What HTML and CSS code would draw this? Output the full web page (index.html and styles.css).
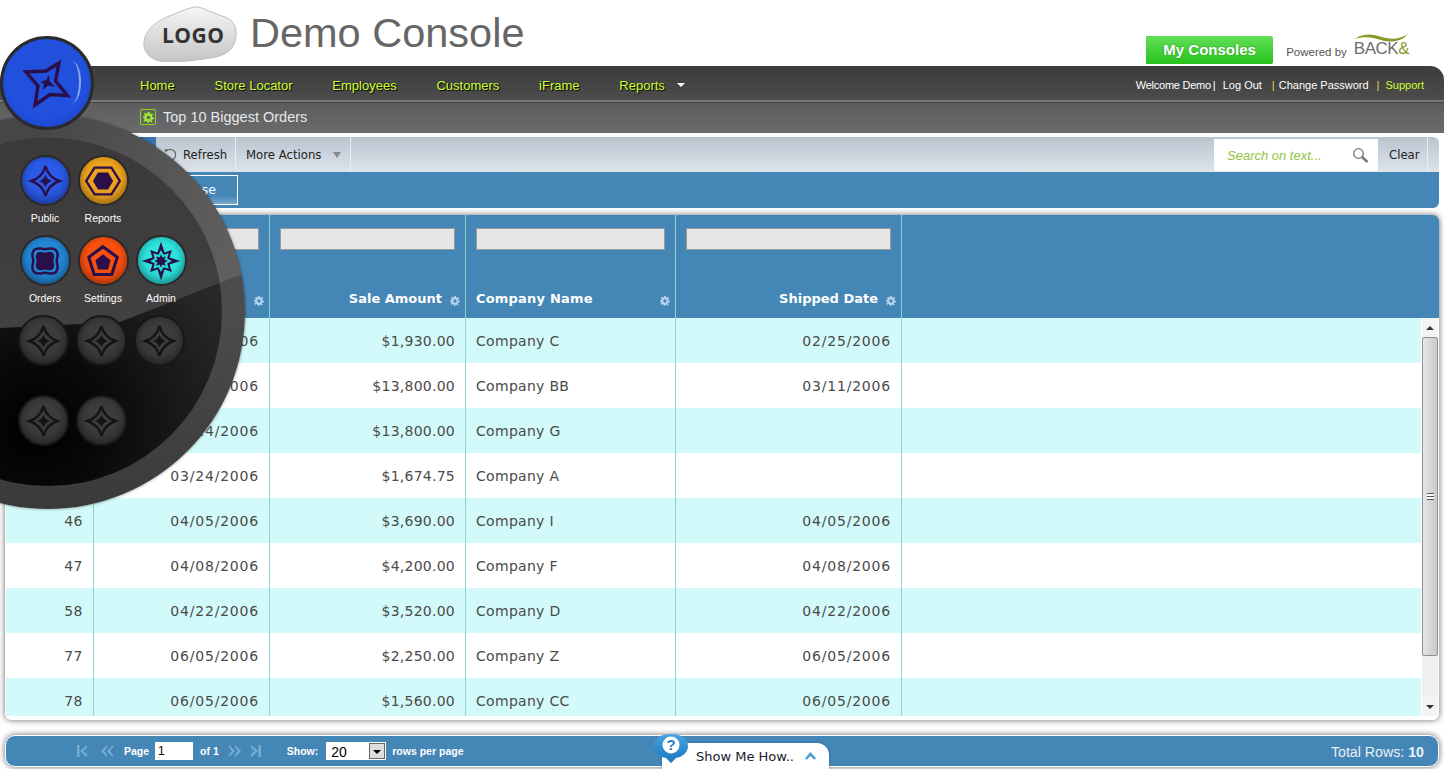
FILE: index.html
```html
<!DOCTYPE html>
<html lang="en">
<head>
<meta charset="utf-8">
<title>Demo Console</title>
<link rel="stylesheet" href="styles.css">
</head>
<body>
<svg class="defs" width="0" height="0" aria-hidden="true">
  <symbol id="star" viewBox="0 0 50 50">
    <path d="M25 9 Q28 21 40 25 Q28 29 25 41 Q22 29 10 25 Q22 21 25 9Z" fill="none" stroke="currentColor" stroke-width="2.6" stroke-linejoin="miter"/>
    <path d="M25 18 Q26.500 23.500 32 25 Q26.500 26.500 25 32 Q23.500 26.500 18 25 Q23.500 23.500 25 18Z" fill="currentColor"/>
  </symbol>
  <symbol id="gear" viewBox="0 0 12 12">
    <path d="M5 0h2l.3 1.700 1.300.5L10 1.300 11 3 9.800 4.200 10.200 5.500 12 6l-.3 1.800-1.700.1-.6 1.300L10.500 10.500 9 11.500 7.800 10.300 6.500 10.700 6 12 4.500 11.700 4.200 10.200 3 9.700 1.500 10.700.500 9.200 1.700 8 1.300 6.800 0 6.500V5l1.500-.3.500-1.200L1 2 2.500.8 3.800 1.800 4.800 1.500Z" fill="currentColor"/>
    <circle class="gear-hole" cx="6" cy="6" r="2"/>
  </symbol>
</svg>

<header class="top">
  <div class="brand">
    <div class="logo">
      <svg class="logo-blob" viewBox="0 0 96 56" width="96" height="56" aria-hidden="true">
        <defs><linearGradient id="lg" x1="0" y1="0" x2="0" y2="1"><stop offset="0" stop-color="#f6f6f6"/><stop offset="1" stop-color="#c4c4c4"/></linearGradient></defs>
        <path d="M2 36C3 24 14 15 30 9 42 4 50 .5 56 1 62 2 70 7 80 10 91 13 95 20 94 30 93 42 86 48 74 51 58 54 40 56 24 56 10 55 1 48 2 36Z" fill="url(#lg)" stroke="#bdbdbd"/>
      </svg>
      <span class="logo-text">LOGO</span>
    </div>
    <h1 class="title">Demo Console</h1>
  </div>
  <div class="top-right">
    <a class="consoles">My Consoles</a>
    <div class="powered">
      <span>Powered by</span>
      <span class="back">
        <svg class="swoosh" viewBox="0 0 56 10" width="56" height="10" aria-hidden="true"><path d="M1 6C10 0 18 1 28 4 38 7 46 6 54 1 47 9 37 10 27 7 18 4 10 3 1 6Z" fill="#8a9a2a"/></svg>
        <span class="back-text">BACK<em>&amp;</em></span>
      </span>
    </div>
  </div>
</header>

<div class="bars">
  <nav class="nav">
    <ul class="menu">
      <li>Home</li><li>Store Locator</li><li>Employees</li><li>Customers</li><li>iFrame</li><li class="has-arrow">Reports</li>
    </ul>
    <div class="user">
      <span class="welcome">Welcome Demo</span><i class="sep">|</i><span class="logout">Log Out</span><i class="sep y">|</i><span>Change Password</span><i class="sep y">|</i><span class="support">Support</span>
    </div>
  </nav>
  <div class="subbar">
    <span class="page-icon"><svg width="11" height="11" aria-hidden="true"><use href="#gear"/></svg></span>
    <span>Top 10 Biggest Orders</span>
  </div>
</div>

<section class="tools">
  <div class="toolbar">
    <span class="tool-blue"></span>
    <span class="tool refresh">
      <svg width="14" height="14" viewBox="0 0 14 14" aria-hidden="true"><path d="M3 3.200A5.500 5.500 0 1 1 1.800 8" fill="none" stroke="#666" stroke-width="1.300"/><path d="M1.500 1l3.500.5-2.500 3Z" fill="#666"/></svg>
      Refresh
    </span>
    <span class="tool more">More Actions <i class="tri"></i></span>
    <span class="tool-space"></span>
    <span class="search"><em>Search on text...</em>
      <svg width="17" height="17" viewBox="0 0 17 17" aria-hidden="true"><circle cx="6.500" cy="6.500" r="4.800" fill="#fff" stroke="#777" stroke-width="1.300"/><path d="M10 10l5.500 5" stroke="#777" stroke-width="2.600"/></svg>
    </span>
    <span class="tool clear">Clear</span>
  </div>
  <div class="actionbar"><a class="close">Close</a></div>
</section>

<main class="grid">
  <div class="grid-scroll">
    <table class="data">
      <colgroup><col class="c1"><col class="c2"><col class="c3"><col class="c4"><col class="c5"><col></colgroup>
      <thead>
        <tr>
          <th class="r"><span class="th-in"><input class="filter" aria-label="Filter id"><span class="th-label"><svg class="gear" aria-hidden="true"><use href="#gear"/></svg></span></span></th>
          <th class="r"><span class="th-in"><input class="filter" aria-label="Filter order date"><span class="th-label"><svg class="gear" aria-hidden="true"><use href="#gear"/></svg></span></span></th>
          <th class="r"><span class="th-in"><input class="filter" aria-label="Filter sale amount"><span class="th-label">Sale Amount<svg class="gear" aria-hidden="true"><use href="#gear"/></svg></span></span></th>
          <th class="l"><span class="th-in"><input class="filter" aria-label="Filter company name"><span class="th-label">Company Name<svg class="gear" aria-hidden="true"><use href="#gear"/></svg></span></span></th>
          <th class="r"><span class="th-in"><input class="filter" aria-label="Filter shipped date"><span class="th-label">Shipped Date<svg class="gear" aria-hidden="true"><use href="#gear"/></svg></span></span></th>
          <th></th>
        </tr>
      </thead>
      <tbody>
        <tr><td class="r">30</td><td class="r">01/20/2006</td><td class="r">$1,930.00</td><td>Company C</td><td class="r">02/25/2006</td><td></td></tr>
        <tr><td class="r">33</td><td class="r">02/10/2006</td><td class="r">$13,800.00</td><td>Company BB</td><td class="r">03/11/2006</td><td></td></tr>
        <tr><td class="r">41</td><td class="r">03/24/2006</td><td class="r">$13,800.00</td><td>Company G</td><td class="r"></td><td></td></tr>
        <tr><td class="r">42</td><td class="r">03/24/2006</td><td class="r">$1,674.75</td><td>Company A</td><td class="r"></td><td></td></tr>
        <tr><td class="r">46</td><td class="r">04/05/2006</td><td class="r">$3,690.00</td><td>Company I</td><td class="r">04/05/2006</td><td></td></tr>
        <tr><td class="r">47</td><td class="r">04/08/2006</td><td class="r">$4,200.00</td><td>Company F</td><td class="r">04/08/2006</td><td></td></tr>
        <tr><td class="r">58</td><td class="r">04/22/2006</td><td class="r">$3,520.00</td><td>Company D</td><td class="r">04/22/2006</td><td></td></tr>
        <tr><td class="r">77</td><td class="r">06/05/2006</td><td class="r">$2,250.00</td><td>Company Z</td><td class="r">06/05/2006</td><td></td></tr>
        <tr><td class="r">78</td><td class="r">06/05/2006</td><td class="r">$1,560.00</td><td>Company CC</td><td class="r">06/05/2006</td><td></td></tr>
      </tbody>
    </table>
  </div>
  <div class="scrollbar" aria-hidden="true">
    <span class="sb-head"></span>
    <span class="sb-up"></span>
    <span class="sb-thumb"><i class="grip"></i></span>
    <span class="sb-rest"></span>
    <span class="sb-down"></span>
  </div>
</main>

<footer class="pager">
  <svg class="pg-icon first" width="11" height="12" viewBox="0 0 11 12" aria-hidden="true"><path d="M0 0h2.500v12H0zM10 0v3L6 6l4 3v3L3 6Z"/></svg>
  <svg class="pg-icon prev" width="12" height="12" viewBox="0 0 12 12" aria-hidden="true"><path d="M6 0v2.500L3 6l3 3.500V12L0 6ZM12 0v2.500L9 6l3 3.500V12L6 6Z"/></svg>
  <span class="pg-text page">Page</span>
  <input class="pg-input" value="1" aria-label="Page">
  <span class="pg-text of">of 1</span>
  <svg class="pg-icon next" width="12" height="12" viewBox="0 0 12 12" aria-hidden="true"><path d="M6 0v2.500L9 6 6 9.500V12l6-6ZM0 0v2.500L3 6 0 9.500V12l6-6Z"/></svg>
  <svg class="pg-icon last" width="11" height="12" viewBox="0 0 11 12" aria-hidden="true"><path d="M11 0H8.500v12H11zM1 0v3l4 3-4 3v3l7-6Z"/></svg>
  <span class="pg-text show">Show:</span>
  <span class="pg-select">20<i class="pg-drop"></i></span>
  <span class="pg-text rows">rows per page</span>
  <span class="total">Total Rows: <b>10</b></span>
</footer>

<div class="howto">
  <svg class="bubble" width="36" height="30" viewBox="0 0 36 30" aria-hidden="true">
    <defs><linearGradient id="bb" x1="0" y1="0" x2="0" y2="1"><stop offset="0" stop-color="#4aa3e0"/><stop offset="1" stop-color="#1a77c0"/></linearGradient></defs>
    <path d="M18 0C28 0 35 4 35 12 35 19 29 23 23 24L18 29 13 24C7 23 1 19 1 12 1 4 8 0 18 0Z" fill="url(#bb)"/>
    <circle cx="18" cy="11" r="8.500" fill="#fff"/>
  </svg>
  <span class="bubble-q">?</span>
  <span class="how-text">Show Me How..</span>
  <svg width="11" height="8" viewBox="0 0 11 8" aria-hidden="true"><path d="M1 7l4.500-5L10 7" fill="none" stroke="#4a9ad4" stroke-width="2.600"/></svg>
</div>

<aside class="radial">
  <div class="ring-shine"></div>
  <div class="radial-inner"><div class="radial-shine"></div></div>
  <div class="apps">
    <div class="app"><span class="orb blue"><svg width="48" height="48"><use href="#star"/></svg></span><span class="app-label">Public</span></div>
    <div class="app"><span class="orb amber"><svg width="42" height="42" viewBox="0 0 50 50"><path d="M15 9h20l10 16-10 16H15L5 25Z" fill="none" stroke="#2a0f4a" stroke-width="2.800"/><path d="M19 15h12l6 10-6 10H19l-6-10Z" fill="#2a0f4a"/></svg></span><span class="app-label">Reports</span></div>
    <div class="app"></div>
    <div class="app"><span class="orb sky"><svg width="42" height="42" viewBox="0 0 50 50"><path d="M18 10C21 10 22 11 25 11 28 11 29 10 32 10 37 10 40 13 40 18 40 21 39 22 39 25 39 28 40 29 40 32 40 37 37 40 32 40 29 40 28 39 25 39 22 39 21 40 18 40 13 40 10 37 10 32 10 29 11 28 11 25 11 22 10 21 10 18 10 13 13 10 18 10Z" fill="none" stroke="#2a0f4a" stroke-width="3"/><path d="M20 14C22 14 23 15 25 15 27 15 28 14 30 14 34 14 36 16 36 20 36 22 35 23 35 25 35 27 36 28 36 30 36 34 34 36 30 36 28 36 27 35 25 35 23 35 22 36 20 36 16 36 14 34 14 30 14 28 15 27 15 25 15 23 14 22 14 20 14 16 16 14 20 14Z" fill="#2a0f4a"/></svg></span><span class="app-label">Orders</span></div>
    <div class="app"><span class="orb red"><svg width="42" height="42" viewBox="0 0 50 50"><path d="M25 8 42 20.500 35.500 41H14.500L8 20.500Z" fill="none" stroke="#2a0f4a" stroke-width="3.600"/><path d="M25 17 34 24 31 35H19L16 24Z" fill="#2a0f4a"/></svg></span><span class="app-label">Settings</span></div>
    <div class="app"><span class="orb teal"><svg width="42" height="42" viewBox="0 0 50 50"><path d="M25 2 29.200 14.800 38 12 35.200 20.800 48 25 35.200 29.200 38 38 29.200 35.200 25 48 20.800 35.200 12 38 14.800 29.200 2 25 14.800 20.800 12 12 20.800 14.800Z" fill="#2a0f4a"/><path d="M25 12 28 17.600 34.200 15.800 32.400 22 38 25 32.400 28 34.200 34.200 28 32.400 25 38 22 32.400 15.800 34.200 17.600 28 12 25 17.600 22 15.800 15.800 22 17.600Z" fill="#24dcd8"/><path d="M25 17 26.700 20.800 30.700 19.300 29.200 23.300 33 25 29.200 26.700 30.700 30.700 26.700 29.200 25 33 23.300 29.200 19.300 30.700 20.800 26.700 17 25 20.800 23.300 19.300 19.300 23.300 20.800Z" fill="#2a0f4a"/></svg></span><span class="app-label">Admin</span></div>
    <div class="app dim"><span class="orb off"><svg width="48" height="48"><use href="#star"/></svg></span></div>
    <div class="app dim"><span class="orb off"><svg width="48" height="48"><use href="#star"/></svg></span></div>
    <div class="app dim"><span class="orb off"><svg width="48" height="48"><use href="#star"/></svg></span></div>
    <div class="app dim"><span class="orb off"><svg width="48" height="48"><use href="#star"/></svg></span></div>
    <div class="app dim"><span class="orb off"><svg width="48" height="48"><use href="#star"/></svg></span></div>
  </div>
</aside>
<div class="hub">
  <svg width="60" height="60" viewBox="0 0 60 60" aria-hidden="true">
    <path d="M9 19 29 18 42 10 38.500 28 50.500 42.500 33 41.500 18 52 21 33Z" fill="none" stroke="#2a0f4a" stroke-width="3.400"/>
    <path d="M32 22 32.500 28 38 34 31 32.500 25.700 37 27 31 23.700 28.700 29 27Z" fill="#2a0f4a"/>
  </svg>
</div>
</body>
</html>
```
FILE: styles.css
```css
* { box-sizing: border-box; }
html, body { margin: 0; height: 769px; overflow: hidden; }
body { background: #fff; font-family: "Liberation Sans", Arial, sans-serif; position: relative; color: #333; }
.defs { position: absolute; }
.gear-hole { fill: var(--hole, #4486b6); }

/* header */
.top { height: 66px; display: flex; justify-content: space-between; padding: 0 35px 0 142px; }
.brand { display: flex; align-items: flex-start; }
.logo { position: relative; width: 96px; height: 56px; margin-top: 6px; }
.logo-blob { display: block; }
.logo-text { position: absolute; left: 20px; top: 17px; font: bold 21px "Open Sans", sans-serif; letter-spacing: .5px; color: #333; line-height: 24px; }
.title { margin: 9px 0 0 12px; font: normal 41.500px/48px "Liberation Sans", sans-serif; color: #666; }
.top-right { display: flex; align-items: flex-end; gap: 13px; padding-bottom: 2px; }
.consoles { width: 127px; height: 28px; background: linear-gradient(#62df58, #27c21c); border-radius: 0 2px 2px 0; color: #fff; font: bold 15px/28px "Liberation Sans", sans-serif; text-align: center; text-shadow: 0 0 2px rgba(0,80,0,.4); }
.powered { display: flex; align-items: flex-end; gap: 7px; font-size: 11.500px; color: #555; padding-bottom: 6px; }
.back { position: relative; display: block; line-height: 16px; }
.swoosh { position: absolute; left: 0; top: -8px; }
.back-text { font: 17px/16px "Liberation Sans", sans-serif; color: #6d6d6d; letter-spacing: -.5px; }
.back-text em { font-style: normal; color: #8a9a2a; }

/* dark bars */
.bars { height: 67px; }
.nav { height: 36px; background: linear-gradient(#3c3c3c, #4c4c4c); border-radius: 16px 14px 0 0; display: flex; justify-content: space-between; align-items: center; padding: 4px 20px 0 140px; border-bottom: 2px solid #777; }
.menu { list-style: none; display: flex; gap: 39.800px; margin: 0; padding: 0; color: #ccff33; font-size: 13px; text-shadow: 1px 1px 1px #000; }
.has-arrow { position: relative; padding-right: 20px; }
.has-arrow::after { content: ""; position: absolute; right: 0; top: 5px; border: 4px solid transparent; border-top: 4px solid #fff; border-bottom: 0; }
.user { display: flex; align-items: center; font-size: 11px; color: #fff; }
.welcome { letter-spacing: -.25px; }
.sep { font-style: normal; margin: 0 7px 0 2px; }
.sep.y { color: #f2d060; margin: 0 4px 0 8px; }
.logout { margin-right: 2px; }
.support { color: #ccff33; margin-left: 2px; }
.subbar { height: 31px; background: linear-gradient(#5d5d5d, #6a6b6d); border-top: 1px solid #444; display: flex; align-items: center; gap: 7px; padding: 0 0 2px 140px; font-size: 14.500px; color: #e4e8ea; }
.page-icon { --hole: #62655c; width: 16px; height: 16px; border: 1px solid #8fd61f; background: #62655c; border-radius: 2px; color: #9fe63a; display: flex; align-items: center; justify-content: center; }

/* toolbar */
.tools { margin: 4px 5px 0; height: 71px; }
.toolbar { height: 35px; background: linear-gradient(#bac4d0, #dde4ea); border-radius: 6px 6px 0 0; display: flex; align-items: stretch; padding-left: 130px; color: #222; }
.tool-blue { width: 21px; background: linear-gradient(#3a70ad, #4486b6); }
.tool { display: flex; align-items: center; gap: 6px; font-family: "DejaVu Sans", sans-serif; font-size: 11.700px; white-space: nowrap; }
.refresh { width: 80px; padding-left: 7px; border-right: 1px solid #e8edf1; }
.more { width: 115px; padding-left: 10px; gap: 10px; border-right: 1px solid #e8edf1; }
.tri { border: 4.500px solid transparent; border-top: 6px solid #888; border-bottom: 0; margin-left: 2px; }
.tool-space { flex: 1; }
.search { width: 164px; margin: 2px 0 1px; background: #fff; display: flex; align-items: center; justify-content: space-between; padding: 0 9px 0 13px; font: italic 13px "Liberation Sans", sans-serif; color: #8fc43a; }
.clear { width: 50px; justify-content: flex-start; padding-left: 11px; margin-right: 11px; border-right: 1px solid #e8edf1; }
.actionbar { height: 36px; background: #4486b6; border-radius: 0 0 6px 6px; padding-left: 125px; padding-top: 3px; }
.close { display: block; width: 108px; height: 30px; border: 1px solid #fff; color: #fff; font: 12.500px/28px "DejaVu Sans", sans-serif; background: linear-gradient(#4486b6 70%, #7aa8cc); text-align: right; padding-right: 21px; }

/* grid */
.grid { margin: 7px 5px 0; height: 505px; border-radius: 6px; background: #fff; display: flex; overflow: hidden; box-shadow: 0 0 6px rgba(0,0,0,.6); padding: 0 1px 4px 1px; position: relative; }
.grid-scroll { width: 1416px; overflow: hidden; }
.data { border-collapse: separate; border-spacing: 0; table-layout: fixed; width: 1416px; font: 14px "DejaVu Sans", sans-serif; letter-spacing: .5px; color: #4a4a4a; }
.c1 { width: 88px; } .c2 { width: 176px; } .c3 { width: 196px; } .c4 { width: 210px; } .c5 { width: 226px; }
.data th, .data td { border-right: 1px solid #8fd3d3; padding: 0 10px; }
.data th { height: 103px; background: #4486b6; vertical-align: top; padding: 0; color: #fff; font-weight: bold; font-size: 13px; letter-spacing: 0; }
.data tbody tr { height: 45px; }
.data tbody tr:nth-child(odd) { background: #d3fafa; }
.data td:nth-child(2), .data td:nth-child(5) { letter-spacing: .8px; }
.data td:nth-child(3) { letter-spacing: .25px; }
.data td:nth-child(4) { letter-spacing: .3px; }
.r { text-align: right; }
.data th.l, .data td { text-align: left; }
.data td.r { text-align: right; }
.th-in { display: flex; flex-direction: column; height: 103px; padding: 13px 10px 0; }
.filter { height: 22px; width: 100%; border: 1px solid #999; background: #e6e6e6; padding: 0; flex: none; }
.th-label { margin-top: auto; height: 27px; display: flex; align-items: flex-start; justify-content: flex-end; gap: 8px; white-space: nowrap; }
.l .th-label { justify-content: space-between; letter-spacing: .2px; }
.gear { width: 10px; height: 10px; color: #b6d4ea; margin: 5px -5px 0 0; flex: none; }
.scrollbar { width: 16px; display: flex; flex-direction: column; background: #efefef; margin-left: 1px; }
.sb-head { height: 103px; background: #4486b6; margin: 0 -2px 0 -1px; flex: none; }
.sb-up, .sb-down { height: 19px; display: flex; align-items: center; justify-content: center; background: #f4f4f4; flex: none; }
.sb-up::after { content: ""; border: 4px solid transparent; border-bottom: 4px solid #333; border-top: 0; }
.sb-down::after { content: ""; border: 4px solid transparent; border-top: 4px solid #333; border-bottom: 0; }
.sb-thumb { height: 319px; flex: none; border: 1px solid #8f8f8f; border-radius: 2px; background: linear-gradient(90deg, #e6e6e6, #c8c8cc); display: flex; align-items: center; justify-content: center; }
.grip { width: 7px; height: 7px; border-top: 1px solid #555; border-bottom: 1px solid #555; background: linear-gradient(#fff 40%, #555 40%, #555 60%, #fff 60%); }
.sb-rest { flex: 1; }

/* pager */
.pager { position: absolute; left: 5px; right: 5px; top: 735px; height: 32px; background: #4486b6; border: 1px solid #fff; box-shadow: 0 0 6px rgba(0,0,0,.6); border-radius: 10px; display: flex; align-items: center; font: bold 10.500px "Liberation Sans", sans-serif; color: #fff; padding-left: 71px; }
.pg-icon { fill: #7aabd0; flex: none; }
.prev { margin-left: 13px; }
.page { margin-left: 11px; }
.pg-input { width: 38px; height: 18px; border: 0; margin-left: 6px; padding: 0 3px; background: #fff; font: 12px "Liberation Sans", sans-serif; color: #000; }
.of { margin-left: 7px; }
.next { margin-left: 10px; }
.last { margin-left: 9px; }
.show { margin-left: 26px; }
.pg-select { position: relative; width: 60px; height: 18px; margin-left: 8px; background: #fff; color: #000; font: 14px/20px "Liberation Sans", sans-serif; padding-left: 5px; }
.pg-drop { position: absolute; right: 1px; top: 1px; width: 16px; height: 16px; background: #ddd; border: 1px solid #666; }
.pg-drop::after { content: ""; position: absolute; left: 3px; top: 6px; border: 4px solid transparent; border-top: 4px solid #000; border-bottom: 0; }
.rows { margin-left: 6px; }
.total { margin-left: auto; margin-right: 14px; padding-top: 1px; font: 14.200px "Liberation Sans", sans-serif; color: #e8f0f6; }
.howto { position: absolute; left: 662px; top: 743px; width: 167px; height: 26px; background: #fff; border-radius: 12px 12px 0 0; box-shadow: 0 0 3px rgba(0,50,100,.4); display: flex; align-items: center; gap: 11px; padding-left: 34px; font: 13px "DejaVu Sans", sans-serif; color: #1a1a2e; }
.bubble { position: absolute; left: -9px; top: -9px; }
.bubble-q { position: absolute; left: 0; top: -7px; width: 18px; text-align: center; font: bold 15px/18px "Liberation Sans", sans-serif; color: #2a7cc0; }

/* radial menu */
.radial { position: absolute; left: -149px; top: 115px; width: 394px; height: 394px; border-radius: 50%; background: linear-gradient(#4a4a4a, #4c4c4c 50%, #3a3a3a); box-shadow: 0 0 3px rgba(0,0,0,.5); overflow: hidden; }
.ring-shine { position: absolute; inset: 0; background: linear-gradient(100deg, #464646 40%, #636363 95%); clip-path: polygon(0 0, 394px 0, 394px 158px, 269px 207px, 149px 213px, 0 213px); }
.radial-inner { position: absolute; left: 23px; top: 23px; width: 348px; height: 348px; border-radius: 50%; overflow: hidden; background: radial-gradient(circle at 46% 84%, #000 0, #0a0a0a 22%, #262626 60%, #343434 100%); }
.radial-shine { position: absolute; inset: 0; background: linear-gradient(#3b3939, #484646); clip-path: polygon(0 0, 348px 0, 348px 144px, 246px 184px, 126px 190px, 0 178px); }
.apps { position: absolute; left: 165px; top: 40px; width: 174px; display: grid; grid-template-columns: repeat(3, 58px); grid-auto-rows: 80px; }
.app { display: flex; flex-direction: column; align-items: center; gap: 6px; }
.app.dim { margin-left: -4px; }
.orb { width: 51px; height: 51px; border-radius: 50%; border: 2px solid #2a2a2a; display: flex; align-items: center; justify-content: center; color: #2a0f4a; box-shadow: inset 0 -5px 8px rgba(0,0,0,.25); flex: none; }
.blue { background: radial-gradient(circle, #2a5ae6 55%, #1c3fb4); }
.amber { background: radial-gradient(circle, #eda21e 55%, #c07f10); }
.sky { background: radial-gradient(circle, #2286d4 55%, #16609e); }
.red { background: radial-gradient(circle, #f8500f 55%, #cf3a08); }
.teal { background: radial-gradient(circle, #2fe2de 50%, #12a8a6); }
.off { background: radial-gradient(circle, #3c3c3c 50%, #2a2a2a); border-color: #181818; color: #141414; }
.app-label { font: 10.500px "Liberation Sans", sans-serif; color: #fff; white-space: nowrap; }
.hub { position: absolute; left: 0; top: 36px; width: 94px; height: 94px; border-radius: 50%; border: 3px solid #2a2a2a; background: radial-gradient(circle at 48% 45%, #2050dc 60%, #1a40c0 90%, #14309c); display: flex; align-items: center; justify-content: center; }
.hub::after { content: ""; position: absolute; right: 10px; top: 22px; width: 16px; height: 42px; border-right: 2px solid rgba(255,255,255,.5); border-radius: 50%; }
```
